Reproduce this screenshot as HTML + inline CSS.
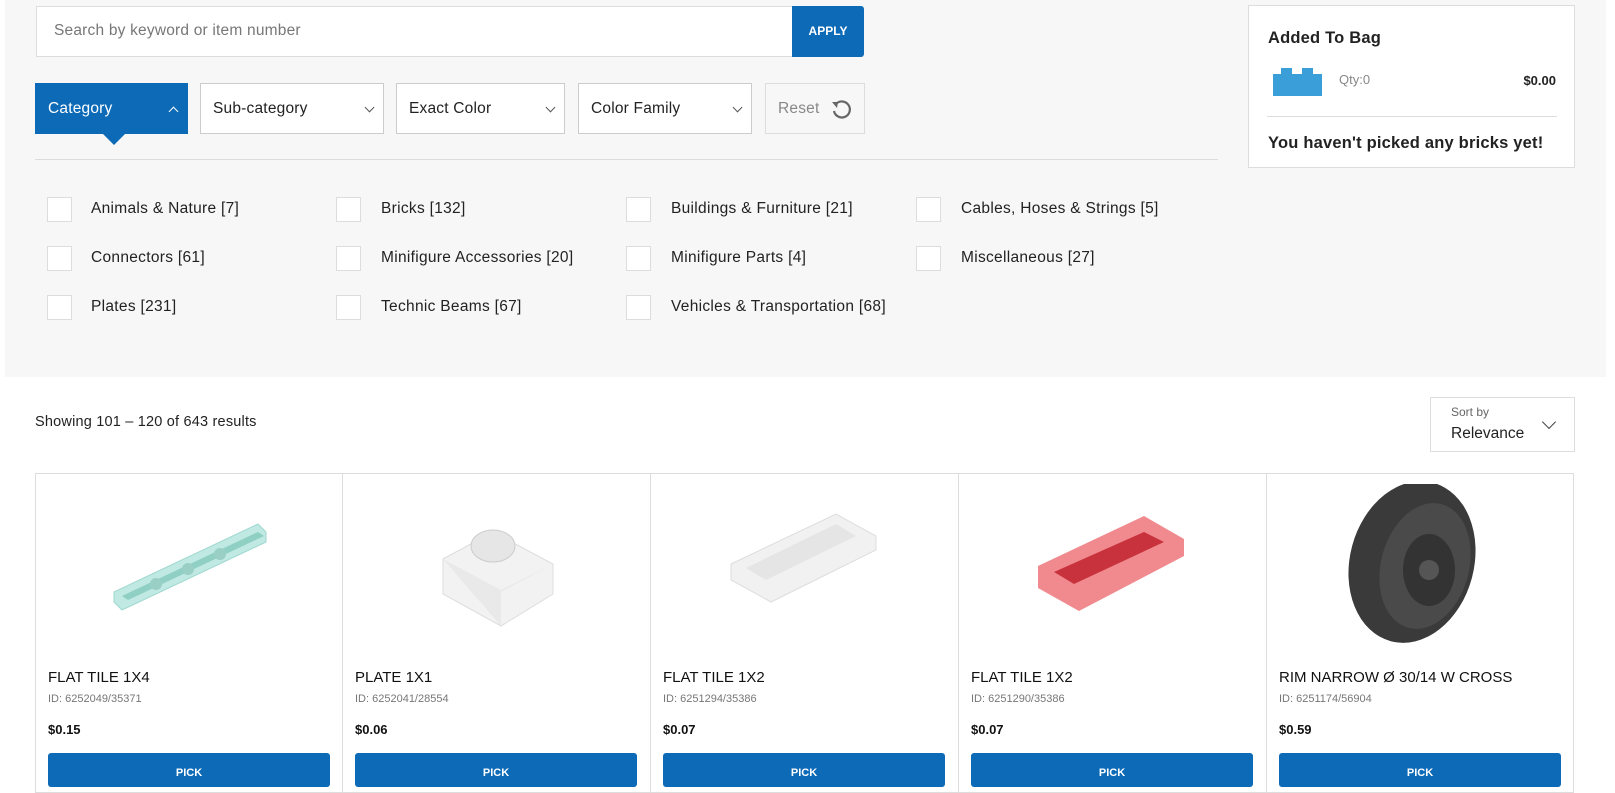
<!DOCTYPE html>
<html><head><meta charset="utf-8"><style>
*{box-sizing:border-box;margin:0;padding:0}
body{width:1615px;height:769px;overflow:hidden;background:#fff;font-family:"Liberation Sans",sans-serif;color:#222;position:relative}
.abs{position:absolute}
.panel{left:5px;top:0;width:1601px;height:377px;background:#f7f7f7}
.search{left:36px;top:6px;width:756px;height:51px;background:#fff;border:1px solid #ddd;border-right:none;font-size:15.5px;color:#777;padding:15px 17px;letter-spacing:0.2px}
.apply{left:792px;top:6px;width:72px;height:51px;background:#0d6ab7;color:#fff;font-size:12px;font-weight:bold;text-align:center;line-height:51px;border-radius:0 3px 3px 0}
.dd{top:83px;height:51px;background:#fff;border:1px solid #ccc;font-size:15.5px;line-height:49px;padding-left:12px;color:#222;letter-spacing:0.2px}
.dd .chev{position:absolute;right:10px;top:20px;width:7px;height:7px;border-right:1px solid #555;border-bottom:1px solid #555;transform:rotate(45deg)}
.cat{background:#0d6ab7;color:#fff;border-color:#0d6ab7}
.cat .chev{border-color:#fff;transform:rotate(-135deg);top:24px}
.cb{width:25px;height:25px;background:#fff;border:1px solid #ddd}
.lbl{font-size:15.5px;color:#222;letter-spacing:0.3px}
.bag{left:1248px;top:5px;width:327px;height:163px;background:#fff;border:1px solid #ddd}
.card{top:473px;width:308px;height:320px;border:1px solid #ddd;border-right:none;background:#fff}
.card .t{position:absolute;left:12px;top:195px;font-size:15px;color:#111}
.card .id{position:absolute;left:12px;top:219px;font-size:11px;color:#777}
.card .p{position:absolute;left:12px;top:248px;font-size:13px;font-weight:bold;color:#111}
.card .b{position:absolute;left:12px;top:279px;width:282px;height:34px;background:#0d6ab7;border-radius:3px;color:#fff;font-size:11px;font-weight:bold;text-align:center;padding-top:14px}
.card svg{position:absolute;left:0;top:10px}
</style></head><body>
<div class="abs panel"></div>
<div class="abs search">Search by keyword or item number</div>
<div class="abs apply">APPLY</div>

<div class="abs dd cat" style="left:35px;width:153px">Category<span class="chev"></span></div>
<div class="abs" style="left:103px;top:134px;width:0;height:0;border-left:11px solid transparent;border-right:11px solid transparent;border-top:11px solid #0d6ab7"></div>
<div class="abs dd" style="left:200px;width:184px">Sub-category<span class="chev"></span></div>
<div class="abs dd" style="left:396px;width:169px">Exact Color<span class="chev"></span></div>
<div class="abs dd" style="left:578px;width:174px">Color Family<span class="chev"></span></div>
<div class="abs dd" style="left:765px;width:100px;background:#f7f7f7;border-color:#ddd;color:#888">Reset
<svg style="position:absolute;right:12px;top:14px" width="22" height="22" viewBox="0 0 22 22"><path d="M6 6 A8 8 0 1 1 4 13" fill="none" stroke="#666" stroke-width="2.2"/><path d="M2 4 L8 4 L7 10 Z" fill="#666"/></svg></div>
<div class="abs" style="left:35px;top:159px;width:1183px;height:1px;background:#ddd"></div>

<div class="abs cb" style="left:47px;top:197px"></div><div class="abs lbl" style="left:91px;top:200px">Animals &amp; Nature [7]</div>
<div class="abs cb" style="left:336px;top:197px"></div><div class="abs lbl" style="left:381px;top:200px">Bricks [132]</div>
<div class="abs cb" style="left:626px;top:197px"></div><div class="abs lbl" style="left:671px;top:200px">Buildings &amp; Furniture [21]</div>
<div class="abs cb" style="left:916px;top:197px"></div><div class="abs lbl" style="left:961px;top:200px">Cables, Hoses &amp; Strings [5]</div>
<div class="abs cb" style="left:47px;top:246px"></div><div class="abs lbl" style="left:91px;top:249px">Connectors [61]</div>
<div class="abs cb" style="left:336px;top:246px"></div><div class="abs lbl" style="left:381px;top:249px">Minifigure Accessories [20]</div>
<div class="abs cb" style="left:626px;top:246px"></div><div class="abs lbl" style="left:671px;top:249px">Minifigure Parts [4]</div>
<div class="abs cb" style="left:916px;top:246px"></div><div class="abs lbl" style="left:961px;top:249px">Miscellaneous [27]</div>
<div class="abs cb" style="left:47px;top:295px"></div><div class="abs lbl" style="left:91px;top:298px">Plates [231]</div>
<div class="abs cb" style="left:336px;top:295px"></div><div class="abs lbl" style="left:381px;top:298px">Technic Beams [67]</div>
<div class="abs cb" style="left:626px;top:295px"></div><div class="abs lbl" style="left:671px;top:298px">Vehicles &amp; Transportation [68]</div>

<div class="abs bag">
 <div class="abs" style="left:19px;top:23px;font-size:16.5px;font-weight:bold;color:#222;letter-spacing:0.2px">Added To Bag</div>
 <svg class="abs" style="left:24px;top:62px" width="50" height="28"><rect x="0" y="6" width="49" height="22" fill="#3a9fd8"/><rect x="8" y="0" width="11" height="7" fill="#3a9fd8"/><rect x="29" y="0" width="11" height="7" fill="#3a9fd8"/></svg>
 <div class="abs" style="left:90px;top:66px;font-size:13px;color:#888">Qty:0</div>
 <div class="abs" style="right:18px;top:67px;font-size:13px;font-weight:bold">$0.00</div>
 <div class="abs" style="left:18px;top:110px;width:290px;height:1px;background:#ddd"></div>
 <div class="abs" style="left:19px;top:128px;font-size:16.5px;font-weight:bold;color:#222;letter-spacing:0.2px">You haven't picked any bricks yet!</div>
</div>

<div class="abs" style="left:35px;top:414px;font-size:14.5px;color:#222;letter-spacing:0.2px">Showing 101 – 120 of 643 results</div>
<div class="abs" style="left:1430px;top:397px;width:145px;height:55px;border:1px solid #ddd;background:#fff">
 <div class="abs" style="left:20px;top:7px;font-size:12px;color:#666">Sort by</div>
 <div class="abs" style="left:20px;top:27px;font-size:15.5px;color:#222">Relevance</div>
 <div class="abs" style="right:20px;top:19px;width:10px;height:10px;border-right:1.5px solid #444;border-bottom:1.5px solid #444;transform:rotate(45deg)"></div>
</div>

<div class="abs card" style="left:35px">
 <svg width="308" height="170"><polygon points="78,108 222,40 230,48 230,58 86,126 78,118" fill="#bfe9e2" stroke="#9fd8cf"/><polygon points="86,112 222,48 228,52 92,116" fill="#8fcfc4"/><circle cx="120" cy="100" r="6" fill="#9acfc6"/><circle cx="152" cy="85" r="6" fill="#9acfc6"/><circle cx="184" cy="70" r="6" fill="#9acfc6"/></svg>
 <div class="t">FLAT TILE 1X4</div><div class="id">ID: 6252049/35371</div><div class="p">$0.15</div><div class="b">PICK</div></div>
<div class="abs card" style="left:342px">
 <svg width="308" height="170"><polygon points="100,75 150,48 210,80 210,110 158,142 100,110" fill="#f2f2f2" stroke="#ddd"/><polygon points="100,75 158,106 210,80 158,108 158,142" fill="#e9e9e9"/><ellipse cx="150" cy="62" rx="22" ry="16" fill="#e6e6e6" stroke="#ccc"/></svg>
 <div class="t">PLATE 1X1</div><div class="id">ID: 6252041/28554</div><div class="p">$0.06</div><div class="b">PICK</div></div>
<div class="abs card" style="left:650px">
 <svg width="308" height="170"><polygon points="80,80 185,30 225,52 225,66 120,118 80,96" fill="#f1f1f1" stroke="#ddd"/><polygon points="95,84 185,40 205,52 115,96" fill="#e5e5e5"/></svg>
 <div class="t">FLAT TILE 1X2</div><div class="id">ID: 6251294/35386</div><div class="p">$0.07</div><div class="b">PICK</div></div>
<div class="abs card" style="left:958px">
 <svg width="308" height="170"><polygon points="79,82 185,32 225,55 225,72 120,127 79,104" fill="#f08a8e"/><polygon points="95,88 185,48 205,58 115,100" fill="#c8323d"/></svg>
 <div class="t">FLAT TILE 1X2</div><div class="id">ID: 6251290/35386</div><div class="p">$0.07</div><div class="b">PICK</div></div>
<div class="abs card" style="left:1266px;border-right:1px solid #ddd">
 <svg width="308" height="170"><ellipse cx="145" cy="78" rx="62" ry="82" fill="#3a3a3a" transform="rotate(15 145 78)"/><ellipse cx="158" cy="82" rx="44" ry="64" fill="#4a4a4a" transform="rotate(15 158 82)"/><ellipse cx="162" cy="86" rx="26" ry="36" fill="#333"/><circle cx="162" cy="86" r="10" fill="#555"/></svg>
 <div class="t">RIM NARROW Ø 30/14 W CROSS</div><div class="id">ID: 6251174/56904</div><div class="p">$0.59</div><div class="b">PICK</div></div>
</body></html>
